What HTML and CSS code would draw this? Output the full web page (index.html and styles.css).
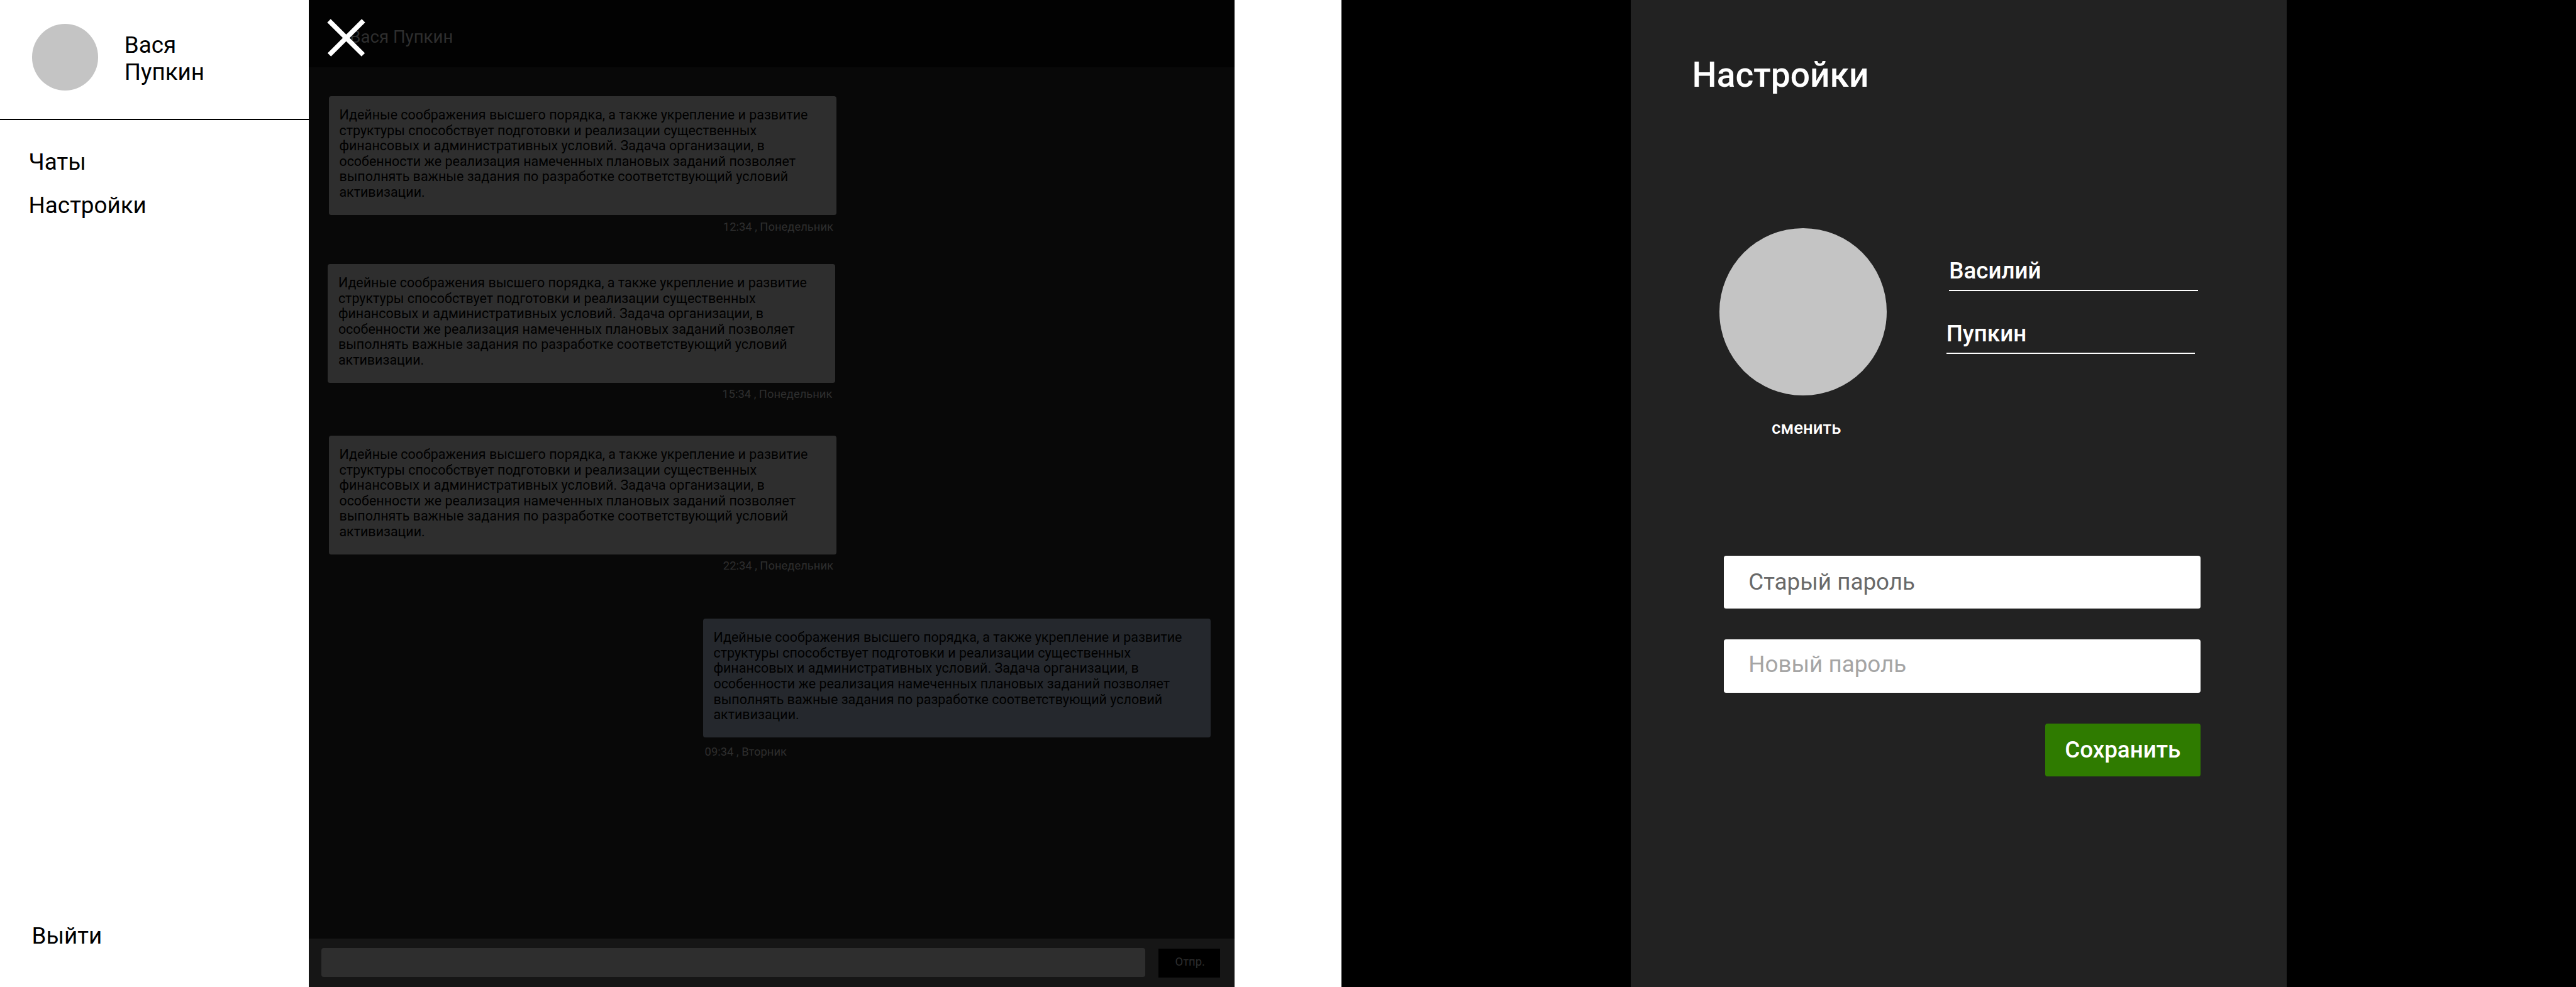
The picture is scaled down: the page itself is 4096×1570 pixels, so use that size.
FILE: index.html
```html
<!DOCTYPE html>
<html lang="ru">
<head>
<meta charset="utf-8">
<title>Чат и настройки</title>
<link rel="stylesheet" href="styles.css">
</head>
<body>
<div class="board">
  <section class="screen screen-chat">
    <aside class="menu">
      <div class="profile">
        <div class="avatar"></div>
        <div class="profile-name">Вася<br>Пупкин</div>
      </div>
      <nav class="links">
        <a class="link">Чаты</a>
        <a class="link">Настройки</a>
      </nav>
      <a class="link logout">Выйти</a>
    </aside>
    <main class="chat">
      <header class="chat-header">Вася Пупкин
        <svg class="close" viewBox="0 0 80 80"><path d="M4 4L75 74.500M75.500 4L4.700 74.500" stroke="#fff" stroke-width="10" fill="none"/></svg>
      </header>
      <div class="messages">
        <article class="message">
          <p class="bubble">Идейные соображения высшего порядка, а также укрепление и развитие<br>структуры способствует подготовки и реализации существенных<br>финансовых и административных условий. Задача организации, в<br>особенности же реализация намеченных плановых заданий позволяет<br>выполнять важные задания по разработке соответствующий условий<br>активизации.</p>
          <time class="time">12:34 , Понедельник</time>
        </article>
        <article class="message message-second">
          <p class="bubble">Идейные соображения высшего порядка, а также укрепление и развитие<br>структуры способствует подготовки и реализации существенных<br>финансовых и административных условий. Задача организации, в<br>особенности же реализация намеченных плановых заданий позволяет<br>выполнять важные задания по разработке соответствующий условий<br>активизации.</p>
          <time class="time">15:34 , Понедельник</time>
        </article>
        <article class="message message-third">
          <p class="bubble">Идейные соображения высшего порядка, а также укрепление и развитие<br>структуры способствует подготовки и реализации существенных<br>финансовых и административных условий. Задача организации, в<br>особенности же реализация намеченных плановых заданий позволяет<br>выполнять важные задания по разработке соответствующий условий<br>активизации.</p>
          <time class="time">22:34 , Понедельник</time>
        </article>
        <article class="message message-own">
          <p class="bubble">Идейные соображения высшего порядка, а также укрепление и развитие<br>структуры способствует подготовки и реализации существенных<br>финансовых и административных условий. Задача организации, в<br>особенности же реализация намеченных плановых заданий позволяет<br>выполнять важные задания по разработке соответствующий условий<br>активизации.</p>
          <time class="time">09:34 , Вторник</time>
        </article>
      </div>
      <footer class="composer">
        <div class="composer-input"></div>
        <div class="send">Отпр.</div>
      </footer>
    </main>
  </section>
  <section class="screen screen-settings">
    <main class="panel">
      <h1 class="title">Настройки</h1>
      <div class="person">
        <div class="photo">
          <div class="photo-circle"></div>
          <a class="photo-change">сменить</a>
        </div>
        <div class="names">
          <div class="name-field">Василий</div>
          <div class="name-field name-last">Пупкин</div>
        </div>
      </div>
      <form class="passwords">
        <div class="password password-old">Старый пароль</div>
        <div class="password password-new">Новый пароль</div>
        <div class="save">Сохранить</div>
      </form>
    </main>
  </section>
</div>
</body>
</html>
```
FILE: styles.css
```css
:root { --u: calc(4096px / 5342); }
* { box-sizing: border-box; margin: 0; padding: 0; }
body {
  width: 4096px;
  height: 1570px;
  overflow: hidden;
  background: #fff;
  color: #000;
  font-family: Roboto, "Liberation Sans", sans-serif;
}
.board { display: flex; justify-content: space-between; height: 1570px; }
.screen { display: flex; width: calc(2560 * var(--u)); height: 1570px; }

.menu {
  display: flex;
  flex-direction: column;
  width: calc(640 * var(--u));
  padding-bottom: calc(77 * var(--u));
  font-size: calc(48 * var(--u));
  line-height: calc(56 * var(--u));
}
.profile {
  display: flex;
  align-items: flex-start;
  gap: calc(54 * var(--u));
  height: calc(249 * var(--u));
  padding: calc(50 * var(--u)) 0 0 calc(66 * var(--u));
  border-bottom: 2px solid #000;
}
.avatar {
  width: calc(138 * var(--u));
  height: calc(138 * var(--u));
  border-radius: 50%;
  background: #c4c4c4;
}
.profile-name { padding-top: calc(17 * var(--u)); }
.links {
  display: flex;
  flex-direction: column;
  gap: calc(34 * var(--u));
  padding: calc(60.300 * var(--u)) 0 0 calc(59.500 * var(--u));
}
.logout { margin: auto 0 0 calc(66 * var(--u)); }

.chat {
  display: flex;
  flex-direction: column;
  width: calc(1920 * var(--u));
  background: #080808;
}
.chat-header {
  position: relative;
  height: calc(140 * var(--u));
  padding: calc(55.800 * var(--u)) 0 0 calc(85.500 * var(--u));
  background: #020202;
  color: #2e2e2e;
  font-size: calc(36 * var(--u));
  line-height: calc(42 * var(--u));
}
.close {
  position: absolute;
  left: calc(38 * var(--u));
  top: calc(39.500 * var(--u));
  width: calc(80 * var(--u));
  height: calc(80 * var(--u));
}
.messages {
  display: flex;
  flex: 1;
  flex-direction: column;
  align-items: flex-start;
  padding: calc(60 * var(--u)) calc(50 * var(--u)) 0 calc(42 * var(--u));
}
.message { width: calc(1052 * var(--u)); }
.message-second { margin: calc(64 * var(--u)) 0 0 calc(-2 * var(--u)); }
.message-third { margin-top: calc(72 * var(--u)); }
.message-own { align-self: flex-end; margin-top: calc(96 * var(--u)); }
.bubble {
  height: calc(246 * var(--u));
  padding: calc(23.500 * var(--u)) 0 0 calc(21.500 * var(--u));
  border-radius: calc(5 * var(--u));
  background: #2e2e2e;
  color: #000;
  font-size: calc(28 * var(--u));
  line-height: calc(32 * var(--u));
  white-space: nowrap;
}
.message-own .bubble { background: #25282d; }
.time {
  display: block;
  height: calc(38 * var(--u));
  padding: calc(10 * var(--u)) calc(6 * var(--u)) 0 0;
  color: #2e2e2e;
  font-size: calc(24 * var(--u));
  line-height: calc(28 * var(--u));
  text-align: right;
}
.message-own .time { padding: calc(16 * var(--u)) 0 0 calc(3.500 * var(--u)); text-align: left; }
.composer {
  display: flex;
  align-items: flex-start;
  height: calc(100 * var(--u));
  padding: calc(19 * var(--u)) calc(30 * var(--u)) 0 calc(27 * var(--u));
  background: #161616;
}
.composer-input {
  width: calc(1708 * var(--u));
  height: calc(60 * var(--u));
  border-radius: calc(5 * var(--u));
  background: #2e2e2e;
}
.send {
  width: calc(128 * var(--u));
  height: calc(60 * var(--u));
  margin: calc(1 * var(--u)) 0 0 auto;
  padding: calc(14 * var(--u)) 0 0 calc(35 * var(--u));
  background: #000;
  color: #2e2e2e;
  font-size: calc(24 * var(--u));
  line-height: calc(28 * var(--u));
}

.screen-settings { background: #000; }
.panel {
  width: calc(1360 * var(--u));
  margin-left: calc(600 * var(--u));
  background: #222;
  color: #fff;
  font-size: calc(48 * var(--u));
  line-height: calc(56 * var(--u));
}
.title {
  height: calc(474 * var(--u));
  padding: calc(113.700 * var(--u)) 0 0 calc(127 * var(--u));
  font-size: calc(72 * var(--u));
  font-weight: 500;
  line-height: calc(84 * var(--u));
}
.person { display: flex; height: calc(679 * var(--u)); padding-left: calc(184 * var(--u)); }
.photo { width: calc(346 * var(--u)); }
.photo-circle { height: calc(346 * var(--u)); border-radius: 50%; background: #c4c4c4; }
.photo-change {
  display: block;
  padding: calc(47.400 * var(--u)) 0 0 calc(108 * var(--u));
  font-size: calc(36 * var(--u));
  font-weight: 500;
  line-height: calc(42 * var(--u));
}
.names { padding: calc(59 * var(--u)) 0 0 calc(130 * var(--u)); font-weight: 500; }
.name-field {
  width: calc(516 * var(--u));
  height: calc(71 * var(--u));
  padding-top: calc(1.700 * var(--u));
  border-bottom: 2px solid #fff;
}
.name-last { margin: calc(59 * var(--u)) 0 0 calc(-6 * var(--u)); }
.passwords {
  display: flex;
  flex-direction: column;
  gap: calc(64 * var(--u));
  width: calc(988 * var(--u));
  margin-left: calc(193 * var(--u));
}
.password {
  height: calc(110 * var(--u));
  padding: calc(27.500 * var(--u)) 0 0 calc(51 * var(--u));
  border-radius: calc(5 * var(--u));
  background: #fff;
}
.password-old { color: #696969; }
.password-new { padding-top: calc(24.300 * var(--u)); color: #a5a5a5; }
.save {
  align-self: flex-end;
  width: calc(322 * var(--u));
  height: calc(110 * var(--u));
  padding-top: calc(28.200 * var(--u));
  border-radius: calc(5 * var(--u));
  background: #2f7b00;
  font-weight: 500;
  text-align: center;
}
```
